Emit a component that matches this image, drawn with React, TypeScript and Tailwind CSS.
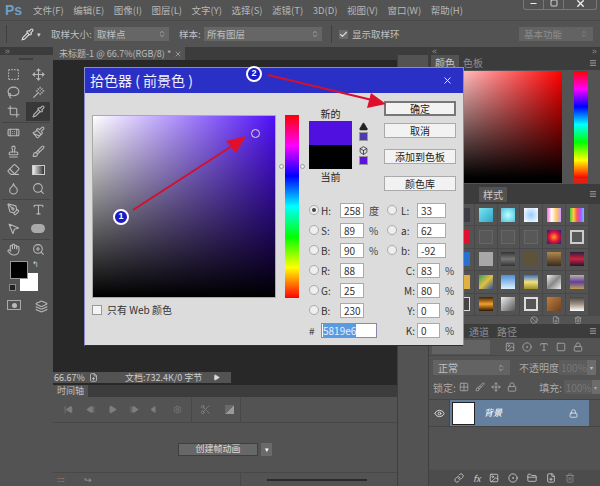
import React from 'react';
import {
  SquareDashed, Move, Lasso, Wand, Crop, Pipette, Bandage, Paintbrush, Stamp, Brush, Eraser,
  Droplet, Search, PenTool, Type, MousePointer2, Hand, ZoomIn, X, Minus, Square, Check,
  ChevronsUpDown, ChevronsLeft, ChevronsRight, Menu, SkipBack, StepBack, Play, StepForward,
  Volume, Settings, Scissors, Eye, Lock, Link, FolderClosed, FilePlus, Trash2, Image, CircleDot,
  Grid2x2, Layers, TriangleAlert, Box, Ban,
} from 'lucide-react';

const FONT = 'font-["Noto_Sans_CJK_SC","Liberation_Sans",sans-serif]';

const MENUS = ['文件(F)', '编辑(E)', '图像(I)', '图层(L)', '文字(Y)', '选择(S)', '滤镜(T)', '3D(D)', '视图(V)', '窗口(W)', '帮助(H)'];

const SWATCHES = [
  'bg-[#4a4a52]', 'bg-[#3d3d46]', 'bg-[linear-gradient(135deg,#7fe3f0,#2aa5c8)]', 'bg-[radial-gradient(#bff,#4cc0e0)]', 'bg-[radial-gradient(#9cf,#fff)]', 'bg-[linear-gradient(to_right,#f6d,#fff,#fc6,#c9f)]', 'bg-[linear-gradient(to_right,#4c4,#fc3,#f55,#a5f,#5cf)]',
  'bg-[#4a4a52]', 'bg-[#e01030]', 'bg-[#585858] border border-[#666]', 'bg-[#585858] border border-[#666]', 'bg-[#585858] border border-[#666]', 'bg-[radial-gradient(#f93,#e01030,#102090)]', 'bg-[#585858] border-2 border-[#ccc]',
  'bg-[#4a4a52]', 'bg-[#2a70d0]', 'bg-[#a8a8a8]', 'bg-[linear-gradient(to_bottom,#333,#777,#333)]', 'bg-[#5e5238]', 'bg-[linear-gradient(to_bottom,#b08850,#3a2a18)]', 'bg-[linear-gradient(to_bottom,#2a2040,#d02040,#201830)]',
  'bg-[#4a4a52]', 'bg-[#e0b040]', 'bg-[linear-gradient(135deg,#3a9a60,#e0c040,#3050a0)]', 'bg-[linear-gradient(to_bottom,#4a90d8,#e0f0ff)]', 'bg-[linear-gradient(to_bottom,#3070d0,#f0e080,#a09020)]', 'bg-[linear-gradient(135deg,#eee,#888,#eee)]', 'bg-[linear-gradient(to_bottom,#c0b0a0,#6040a0,#c0a050)]',
  'bg-[#4a4a52]', 'bg-[#444] border border-[#ddd]', 'bg-[linear-gradient(to_bottom,#402000,#f0a030,#301800)]', 'bg-[linear-gradient(135deg,#eee,#555)]', 'bg-[#555] border-2 border-[#ddd]', 'bg-[linear-gradient(135deg,#c08040,#704020)]', 'bg-[linear-gradient(to_top,#fff,#a09080,#444)]',
];

const ToolIcon = ({ icon: Icon }: { icon: React.ElementType }) => (
  <div className="flex h-[18.5px] w-[22px] items-center justify-center">
    <Icon size={13} strokeWidth={2} />
  </div>
);

const ToolRow = ({ children, active }: { children: React.ReactNode; active?: boolean }) => (
  <div className={`flex justify-between pr-[1px] ${active ? 'bg-[linear-gradient(to_right,transparent_50%,#383838_50%)]' : ''}`}>{children}</div>
);

const ToolSep = () => <div className="flex h-[3px] items-center"><div className="h-px w-full bg-[#444]" /></div>;

const Radio = ({ on }: { on?: boolean }) => (
  <span className="flex h-[10px] w-[10px] shrink-0 items-center justify-center rounded-full border border-[#aaa] bg-[#eee]">
    {on && <span className="h-[4px] w-[4px] rounded-full bg-[#444]" />}
  </span>
);

const Input = ({ value, w }: { value: string; w: string }) => (
  <span className={`flex h-[15px] items-center border border-[#aaa] bg-white pl-[3px] text-[10px] text-[#333] ${w}`}>{value}</span>
);

const LeftField = ({ label, value, unit, on }: { label: string; value: string; unit?: string; on?: boolean }) => (
  <div className="flex h-[14px] items-center">
    <Radio on={on} />
    <span className="ml-[2px] w-[19px] text-[10px] text-[#333]">{label}</span>
    <Input value={value} w="w-[24px]" />
    <span className="ml-[5px] text-[10px] text-[#444]">{unit}</span>
  </div>
);

const DlgButton = ({ label, strong }: { label: string; strong?: boolean }) => (
  <div className={`flex h-[15px] w-[72px] items-center justify-center bg-[#f2f2f2] text-[10px] text-[#222] ${strong ? 'border-2 border-[#777]' : 'border border-[#aaa]'}`}>{label}</div>
);

const PanelTab = ({ label, active }: { label: string; active?: boolean }) => (
  <span className={`flex h-full items-center px-[4px] text-[10px] ${active ? 'bg-[#535353] text-[#ccc]' : 'text-[#8e8e8e]'}`}>{label}</span>
);

export default function App() {
  return (
    <div className={`relative flex h-[486px] w-[600px] flex-col overflow-hidden bg-[#535353] text-[#c0c0c0] ${FONT}`}>
      {/* menu */}
      <div className="flex h-[20px] items-center">
        <span className='w-[33px] pl-[5px] font-["Liberation_Sans",sans-serif] text-[14px] font-bold leading-none text-[#6d9fc6]'>Ps</span>
        <div className="flex gap-[9.5px] text-[9.5px] text-[#b8b8b8]">
          {MENUS.map(m => <span key={m}>{m}</span>)}
        </div>
        <div className="ml-auto mr-[3px] flex h-[13px] -translate-y-[3px] items-center self-start rounded-b-[3px] border border-t-0 border-[#777]">
          <span className="flex h-full w-[20px] items-center justify-center border-r border-[#777]"><Minus size={9} strokeWidth={3} className="text-[#eee]" /></span>
          <span className="flex h-full w-[20px] items-center justify-center border-r border-[#777]"><Square size={8} strokeWidth={2.5} className="text-[#eee]" /></span>
          <span className="flex h-full w-[32px] items-center justify-center"><X size={11} strokeWidth={3} className="text-[#eee]" /></span>
        </div>
      </div>

      {/* options */}
      <div className="flex h-[27px] items-center border-t border-[#484848] text-[9.5px]">
        <span className="ml-[6px] h-[18px] w-px bg-[#3f3f3f]" />
        <Pipette size={13} className="ml-[14px] text-[#ddd]" />
        <span className="ml-[3px] text-[7px] text-[#ccc]">▾</span>
        <span className="ml-[10px] w-[43px]">取样大小:</span>
        <div className="flex h-[14px] w-[75px] items-center justify-between bg-[#666] px-[3px]">取样点<ChevronsUpDown size={8} /></div>
        <span className="ml-[10px] w-[25px]">样本:</span>
        <div className="flex h-[14px] w-[118px] items-center justify-between bg-[#666] px-[3px]">所有图层<ChevronsUpDown size={8} /></div>
        <div className="ml-[9px] h-[18px] w-px bg-[#3f3f3f]" />
        <span className="ml-[7px] flex h-[9px] w-[9px] items-center justify-center bg-[#6a6a6a]"><Check size={9} strokeWidth={3} className="text-[#ddd]" /></span>
        <span className="ml-[4px]">显示取样环</span>
        <div className="ml-auto mr-[7px] flex h-[14px] w-[74px] items-center justify-between bg-[#636363] px-[5px] text-[#8e8e8e]">基本功能<ChevronsUpDown size={8} /></div>
      </div>

      <div className="flex min-h-0 flex-1">
        {/* tools */}
        <div className="flex w-[53px] shrink-0 flex-col">
          <div className="flex h-[8px] items-center bg-[#3c3c3c] pl-[4px]"><ChevronsRight size={7} className="text-[#bbb]" /></div>
          <div className="flex flex-1 flex-col bg-[#535353] pl-[2px] pr-[3px] text-[#b8b8b8]">
            <div className="flex h-[10px] items-start justify-center pt-[3px]"><span className="h-[2px] w-[14px] bg-[#3f3f3f]" /></div>
            <ToolRow><ToolIcon icon={SquareDashed} /><ToolIcon icon={Move} /></ToolRow>
            <ToolRow><ToolIcon icon={Lasso} /><ToolIcon icon={Wand} /></ToolRow>
            <ToolRow active><ToolIcon icon={Crop} /><ToolIcon icon={Pipette} /></ToolRow>
            <ToolSep />
            <ToolRow><ToolIcon icon={Bandage} /><ToolIcon icon={Paintbrush} /></ToolRow>
            <ToolRow><ToolIcon icon={Stamp} /><ToolIcon icon={Brush} /></ToolRow>
            <ToolRow>
              <ToolIcon icon={Eraser} />
              <div className="flex h-[18.5px] w-[22px] items-center justify-center"><span className="h-[10px] w-[13px] border border-[#ccc] bg-[linear-gradient(to_right,#eee,#333)]" /></div>
            </ToolRow>
            <ToolRow><ToolIcon icon={Droplet} /><ToolIcon icon={Search} /></ToolRow>
            <ToolSep />
            <ToolRow><ToolIcon icon={PenTool} /><ToolIcon icon={Type} /></ToolRow>
            <ToolRow>
              <ToolIcon icon={MousePointer2} />
              <div className="flex h-[18.5px] w-[22px] items-center justify-center"><span className="h-[9px] w-[14px] rounded-full bg-[#aaa]" /></div>
            </ToolRow>
            <ToolSep />
            <ToolRow><ToolIcon icon={Hand} /><ToolIcon icon={ZoomIn} /></ToolRow>
            <div className="relative h-[38px] w-full">
              <span className="absolute left-[18px] top-[14px] h-[18px] w-[18px] bg-white" />
              <span className="absolute left-[8px] top-[2px] h-[18px] w-[18px] border border-[#999] bg-black" />
              <span className="absolute left-[7px] top-[25px] h-[7px] w-[7px] border border-[#888] bg-[#222]" />
              <span className="absolute left-[30px] top-[0px] text-[8px] leading-[10px] text-[#ccc]">↰</span>
            </div>
            <div className="mt-[3px] flex justify-between pl-[5px] pr-[2px]">
              <span className="flex h-[10px] w-[14px] items-center justify-center border border-[#aaa]"><span className="h-[5px] w-[5px] rounded-full bg-[#bbb]" /></span>
              <Layers size={13} />
            </div>
          </div>
        </div>

        {/* centre */}
        <div className="flex w-[345px] shrink-0 flex-col border-r border-[#3f3f3f]">
          <div className="flex min-h-0 flex-1 flex-col bg-[#282828]">
            <div className="flex h-[13px] shrink-0 bg-[#3c3c3c]">
              <div className="flex h-full w-[132px] items-center justify-between bg-[#535353] pl-[6px] pr-[3px] text-[9px] text-[#bbb]">
                <span className="whitespace-nowrap">未标题-1 @ 66.7%(RGB/8) *</span><X size={8} className="shrink-0" />
              </div>
            </div>
            <div className="flex-1" />
            <div className="mb-[2px] flex h-[11px] w-[178px] items-center bg-[#535353] text-[9px] text-[#ccc]">
              <span className="w-[36px] pl-px">66.67%</span>
              <FilePlus size={9} />
              <span className="ml-[27px] w-[84px] whitespace-nowrap">文档:732.4K/0 字节</span>
              <Play size={7} fill="#ddd" className="ml-[4px]" />
            </div>
          </div>

          {/* timeline */}
          <div className="flex h-[101px] shrink-0 flex-col bg-[#535353]">
            <div className="flex h-[12px] bg-[#3c3c3c]"><span className="flex w-[35px] items-center justify-center bg-[#535353] text-[9px]">时间轴</span></div>
            <div className="flex h-[26px] items-center border-b border-[#484848] pl-[4px] text-[#7e7e7e]">
              <span className="flex w-[22px] justify-center"><SkipBack size={9} fill="#7e7e7e" /></span>
              <span className="flex w-[22px] justify-center"><StepBack size={9} fill="#7e7e7e" /></span>
              <span className="flex w-[22px] justify-center"><Play size={9} fill="#7e7e7e" /></span>
              <span className="flex w-[22px] justify-center"><StepForward size={9} fill="#7e7e7e" /></span>
              <span className="flex w-[20px] justify-center"><Volume size={9} fill="#7e7e7e" /></span>
              <span className="flex w-[24px] justify-center"><Settings size={9} /></span>
              <span className="ml-[2px] h-full w-px bg-[#484848]" />
              <span className="flex w-[26px] justify-center"><Scissors size={11} /></span>
              <span className="flex w-[22px] justify-center"><span className="h-[9px] w-[9px] bg-[linear-gradient(135deg,#6a6a6a_50%,#9a9a9a_50%)]" /></span>
              <span className="h-full w-px bg-[#484848]" />
            </div>
            <div className="flex flex-1 items-center pl-[125px] pt-[3px]">
              <span className="flex h-[13px] w-[80px] items-center justify-center border border-[#3f3f3f] bg-[#676767] text-[9px] text-[#ddd]">创建帧动画</span>
              <span className="ml-[3px] flex h-[13px] w-[11px] items-center justify-center bg-[#6a6a6a] text-[7px] text-white">▾</span>
            </div>
            <div className="flex h-[14px] items-center border-t border-[#484848] pl-[4px]">
              <span className="w-[27px] text-[7px] leading-none text-[#999]">::::</span>
              <span className="text-[9px] leading-none text-[#999]">↪</span>
              <span className="ml-[148px] h-full w-px bg-[#484848]" />
              <span className="ml-[26px] h-[2px] w-[100px] bg-[#2a2a2a]" />
            </div>
          </div>
        </div>

        {/* collapsed panel icons */}
        <div className="flex w-[30px] shrink-0 flex-col">
          <div className="h-[8px] bg-[#3c3c3c]" />
        </div>

        {/* right panels */}
        <div className="flex min-w-0 flex-1 flex-col border-l border-[#3f3f3f] bg-[#4a4a4a]">
          <div className="flex h-[8px] shrink-0 items-center justify-between bg-[#3c3c3c] px-[2px]">
            <ChevronsLeft size={7} className="text-[#bbb]" />
            <ChevronsRight size={7} className="text-[#bbb]" />
          </div>
          <div className="flex h-[15px] shrink-0 items-center bg-[#3c3c3c] pl-[2px]">
            <PanelTab label="颜色" active /><PanelTab label="色板" />
            <Menu size={8} className="ml-auto mr-[3px] text-[#ccc]" />
          </div>
          <div className="h-[114px] shrink-0 bg-[#535353] pr-[12px] pt-[1px]">
            <div className="flex h-[107px]">
              <div className="h-full w-[133px] bg-[linear-gradient(to_top,#000,transparent),linear-gradient(to_right,#fff,#f00)]" />
              <div className="ml-[12px] h-full w-[14px] bg-[linear-gradient(to_bottom,#f00,#f0f,#00f,#0ff,#0f0,#ff0,#f00)]" />
            </div>
            <div className="flex h-[5px]">
              <div className="h-full w-[133px] bg-black" />
              <div className="ml-[11px] h-full w-[15px] bg-[#e02010]" />
            </div>
          </div>
          <div className="flex h-[20px] shrink-0 items-end bg-[#3c3c3c] pb-[2px] pl-[2px]">
            <span className="flex h-[15px] items-center px-[4px] text-[10px] text-[#8e8e8e]">调整</span>
            <span className="ml-[20px] flex h-[15px] items-center bg-[#535353] px-[4px] text-[10px] text-[#ccc]">样式</span>
            <Menu size={8} className="mb-[4px] ml-auto mr-[3px] text-[#ccc]" />
          </div>
          <div className="grid h-[112px] w-[160px] shrink-0 grid-cols-7 bg-[#535353]">
            {SWATCHES.map((s, i) => (
              <div key={i} className="flex items-center justify-center border-b border-r border-[#484848]">
                <span className={`h-[14px] w-[14px] ${s}`} />
              </div>
            ))}
          </div>
          <div className="flex h-[8px] shrink-0 items-center justify-end gap-[14px] bg-[#535353] pr-[18px] text-[#aaa]">
            <Ban size={8} /><FilePlus size={8} /><Trash2 size={8} />
          </div>
          <div className="flex h-[14px] shrink-0 bg-[#3c3c3c] pl-[36px]">
            <PanelTab label="通道" /><PanelTab label="路径" />
            <Menu size={8} className="ml-auto mr-[3px] mt-[3px] text-[#ccc]" />
          </div>

          {/* layers */}
          <div className="flex min-h-0 flex-1 flex-col bg-[#535353] text-[10px]">
            <div className="flex h-[18px] shrink-0 items-center border-b border-[#484848] pl-[3px] text-[#aaa]">
              <span className="h-[14px] w-[58px] bg-[#636363]" />
              <span className="ml-[15px] flex items-center gap-[7px]"><Image size={10} /><CircleDot size={10} /><Type size={10} /><Square size={10} /><Lock size={10} /></span>
            </div>
            <div className="mt-[4px] flex h-[15px] shrink-0 items-center pl-[4px]">
              <div className="flex h-full w-[77px] items-center justify-between bg-[#636363] px-[5px]">正常<ChevronsUpDown size={8} /></div>
              <span className="ml-[9px] w-[40px] whitespace-nowrap text-[#aaa]">不透明度:</span>
              <span className="flex h-full w-[28px] items-center bg-[#5c5c5c] pl-[2px] text-[#777]">100%</span>
              <span className="flex h-full w-[9px] items-center justify-center bg-[#6c6c6c] text-[6px]">▾</span>
            </div>
            <div className="mt-[5px] flex h-[14px] shrink-0 items-center pl-[4px] text-[#aaa]">
              <span className="w-[28px] whitespace-nowrap">锁定:</span>
              <div className="flex gap-[6px]"><Grid2x2 size={10} /><Brush size={10} /><Move size={10} /><Lock size={10} /></div>
              <span className="ml-[22px] w-[26px] whitespace-nowrap">填充:</span>
              <span className="flex h-full w-[28px] items-center bg-[#5c5c5c] pl-[2px] text-[#777]">100%</span>
              <span className="flex h-full w-[9px] items-center justify-center bg-[#6c6c6c] text-[6px]">▾</span>
            </div>
            <div className="mt-[5px] flex h-[28px] shrink-0 items-stretch border-y border-[#444]">
              <span className="flex w-[21px] items-center justify-center border-r border-[#444]"><Eye size={11} className="text-[#ddd]" /></span>
              <div className="flex w-[139px] items-center bg-[#65809e] pl-[2px]">
                <span className="h-[23px] w-[23px] border border-[#222] bg-white" />
                <span className="ml-[9px] text-[9px] italic text-white">背景</span>
                <Lock size={9} className="ml-auto mr-[11px] text-[#eee]" />
              </div>
            </div>
            <div className="flex-1" />
            <div className="flex h-[16px] shrink-0 items-center gap-[9px] bg-[#4c4c4c] pl-[25px] text-[#ccc]">
              <Link size={10} /><span className="text-[9px] italic leading-none">fx</span><Image size={10} /><CircleDot size={10} /><FolderClosed size={10} /><FilePlus size={10} /><Trash2 size={10} className="text-[#888]" />
            </div>
          </div>
        </div>
      </div>

      {/* colour picker dialog */}
      <div className="absolute left-[84px] top-[67px] flex h-[279px] w-[380px] flex-col border border-[#8a8ad0] border-b-[#2a2a60] bg-[#dcdcdc]">
        <div className="flex h-[25px] shrink-0 items-center justify-between bg-[#2a30c6] pl-[5px] pr-[10px] text-[14px] text-[#f0f0ff]">
          <span>拾色器 ( 前景色 )</span>
          <X size={11} strokeWidth={2} />
        </div>
        <div className="flex flex-1 pl-[7px] pt-[8px]">
          <div className="mt-[14px] w-[184px]">
            <div className="relative h-[183px] w-[184px] border border-[#aaa] bg-[linear-gradient(to_top,#000,transparent),linear-gradient(to_right,#fff,#5010f8)]">
              <span className="absolute left-[158px] top-[13px] h-[9px] w-[9px] rounded-full border border-[#ddd]" />
            </div>
            <div className="mt-[4px] flex items-center text-[10px] text-[#333]">
              <span className="h-[10px] w-[10px] border border-[#999] bg-[#f4f4f4]" />
              <span className="ml-[5px]">只有 Web 颜色</span>
            </div>
          </div>
          <div className="relative ml-[9px] mt-[14px] h-[183px] w-[14px] bg-[linear-gradient(to_bottom,#f00,#f0f,#00f,#0ff,#0f0,#ff0,#f00)]">
            <span className="absolute -left-[6px] top-[49px] h-[5px] w-[5px] rounded-full border border-[#999] bg-[#eee]" />
            <span className="absolute -right-[6px] top-[49px] h-[5px] w-[5px] rounded-full border border-[#999] bg-[#eee]" />
          </div>
          <div className="ml-[10px] flex w-[147px] flex-col">
            <div className="flex h-[102px]">
              <div className="flex w-[43px] flex-col items-center text-[10px] text-[#222]">
                <span className="h-[20px] pt-[6px] leading-[14px]">新的</span>
                <span className="h-[24px] w-[43px] bg-[#5010e0]" />
                <span className="h-[24px] w-[43px] bg-black" />
                <span className="mt-[1px] leading-[14px]">当前</span>
              </div>
              <div className="ml-[6px] mt-[21px] flex w-[10px] flex-col items-center">
                <TriangleAlert size={9} fill="#222" className="text-[#222]" />
                <span className="mt-[1px] h-[9px] w-[9px] border border-[#999] bg-[#4a3cb0]" />
                <Box size={9} className="mt-[5px] text-[#222]" />
                <span className="mt-[1px] h-[9px] w-[9px] border border-[#999] bg-[#6010e0]" />
              </div>
              <div className="ml-[16px] flex flex-col">
                <DlgButton label="确定" strong />
                <div className="mt-[7px]"><DlgButton label="取消" /></div>
                <div className="mt-[11px]"><DlgButton label="添加到色板" /></div>
                <div className="mt-[12px]"><DlgButton label="颜色库" /></div>
              </div>
            </div>
            <div className="flex">
              <div className="flex w-[78px] flex-col gap-[6px]">
                <LeftField label="H:" value="258" unit="度" on />
                <LeftField label="S:" value="89" unit="%" />
                <LeftField label="B:" value="90" unit="%" />
                <LeftField label="R:" value="88" />
                <LeftField label="G:" value="25" />
                <LeftField label="B:" value="230" />
                <div className="flex h-[14px] items-center">
                  <span className="w-[12px] text-[10px] text-[#444]">#</span>
                  <span className="flex h-[15px] w-[56px] items-center border border-[#88a] bg-white pl-[1px] text-[10px]"><span className="bg-[#5a9ae0] text-[#e8f0ff]">5819e6</span></span>
                </div>
              </div>
              <div className="flex flex-col gap-[6px]">
                {[['L:', '33'], ['a:', '62'], ['b:', '-92']].map(([l, v]) => (
                  <div key={l} className="flex h-[14px] items-center">
                    <Radio />
                    <span className="ml-[1px] w-[19px] pl-[3px] text-[10px] text-[#333]">{l}</span>
                    <Input value={v} w="w-[29px]" />
                  </div>
                ))}
                {[['C:', '83'], ['M:', '80'], ['Y:', '0'], ['K:', '0']].map(([l, v]) => (
                  <div key={l} className="flex h-[14px] items-center">
                    <span className="w-[30px] pr-[2px] text-right text-[10px] text-[#333]">{l}</span>
                    <Input value={v} w="w-[23px]" />
                    <span className="ml-[5px] text-[10px] text-[#444]">%</span>
                  </div>
                ))}
              </div>
            </div>
          </div>
        </div>
      </div>

      {/* annotations */}
      <svg className="pointer-events-none absolute left-0 top-0" width="600" height="486" viewBox="0 0 600 486">
        <line x1="133" y1="210" x2="232" y2="146" stroke="#d4102c" strokeWidth="2" />
        <polygon points="246,136 236,153 226,141" fill="#e0102c" />
        <line x1="268" y1="75" x2="372" y2="100" stroke="#d4102c" strokeWidth="2" />
        <polygon points="386,104 367,108 371,93" fill="#e0102c" />
      </svg>
      <span className='absolute left-[113px] top-[209px] flex h-[16px] w-[16px] items-center justify-center rounded-full border-2 border-white bg-[#1a1ac8] font-["Liberation_Sans",sans-serif] text-[9px] font-bold text-white'>1</span>
      <span className='absolute left-[246px] top-[66px] flex h-[16px] w-[16px] items-center justify-center rounded-full border-2 border-white bg-[#1a1ac8] font-["Liberation_Sans",sans-serif] text-[9px] font-bold text-white'>2</span>
    </div>
  );
}
